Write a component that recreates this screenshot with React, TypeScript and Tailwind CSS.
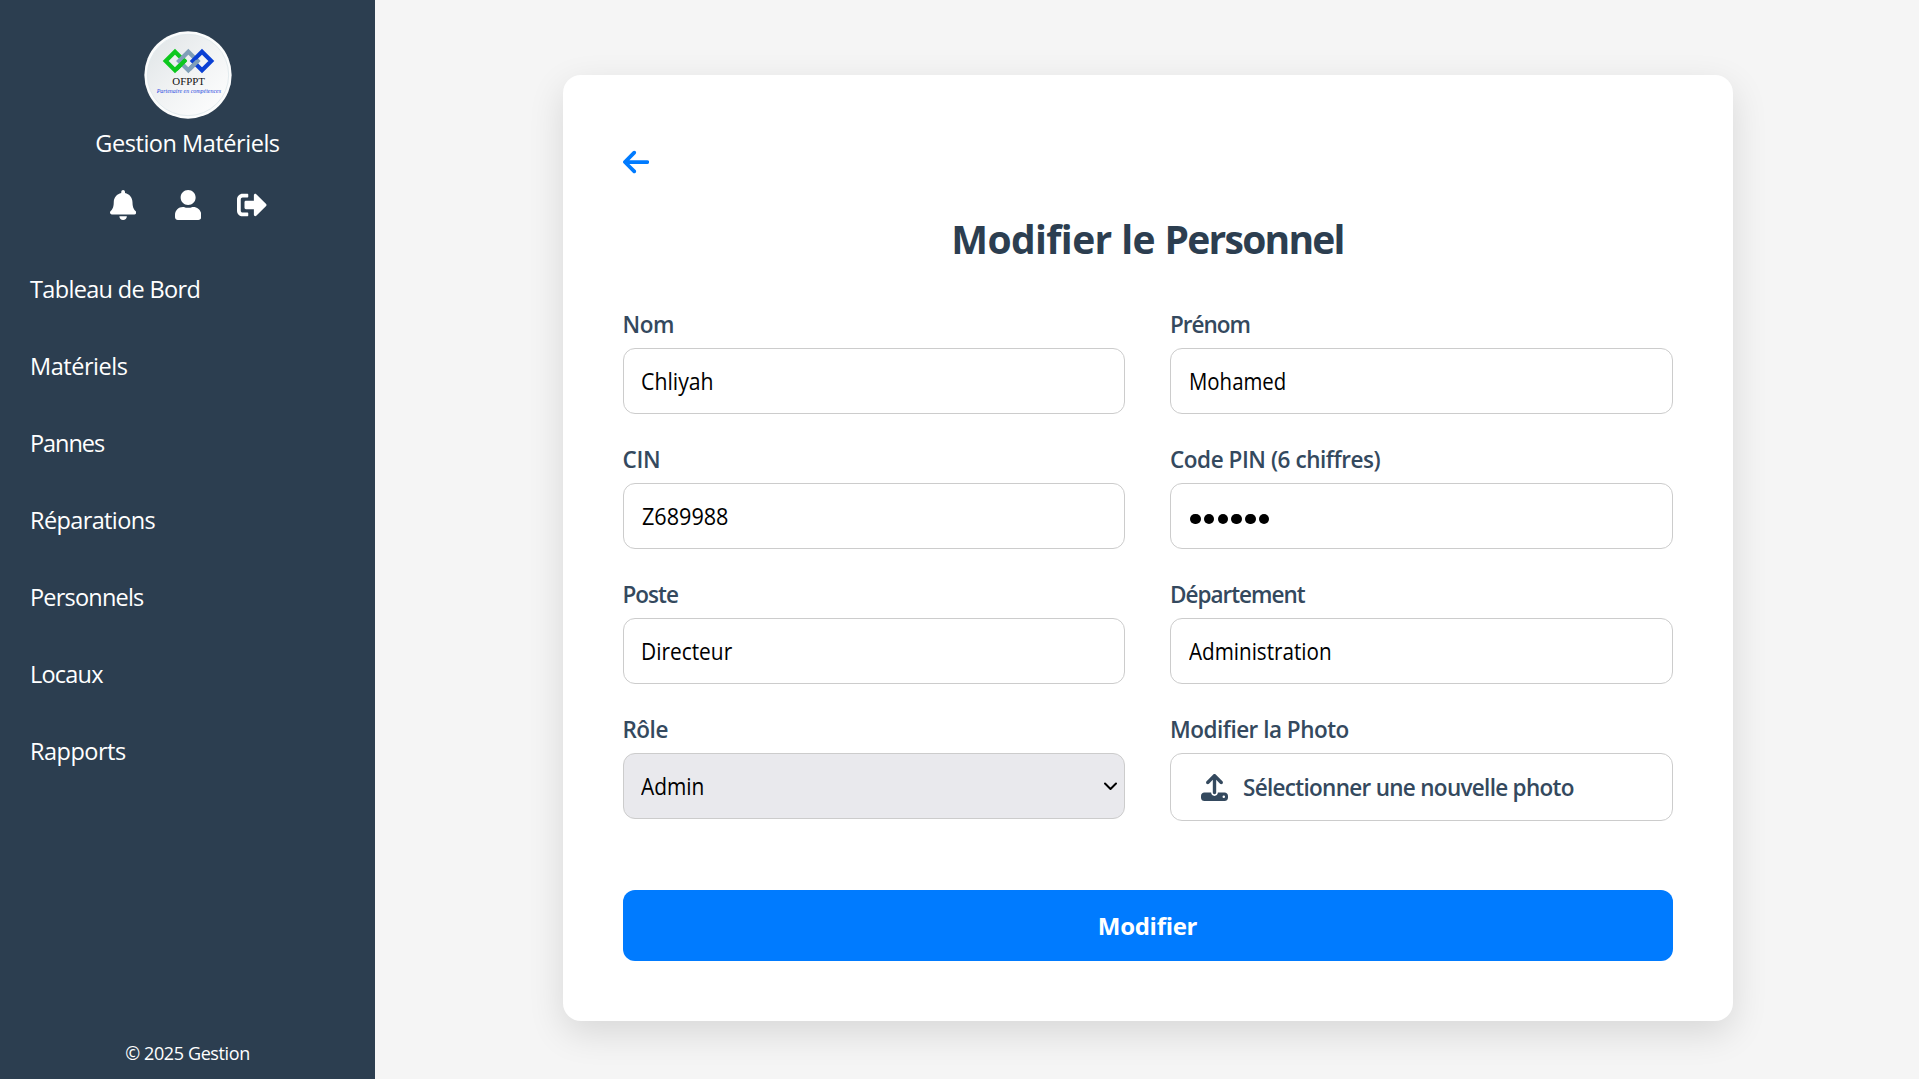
import type { ReactNode } from 'react';
import { FaBell, FaSignOutAlt, FaUser } from 'react-icons/fa';
import { FaArrowLeft, FaUpload } from 'react-icons/fa6';

const navItems = [
  { label: 'Tableau de Bord', tracking: 'tracking-[-0.66px]' },
  { label: 'Matériels', tracking: 'tracking-[-0.45px]' },
  { label: 'Pannes', tracking: 'tracking-[-1.05px]' },
  { label: 'Réparations', tracking: 'tracking-[-0.62px]' },
  { label: 'Personnels', tracking: 'tracking-[-0.8px]' },
  { label: 'Locaux', tracking: 'tracking-[-0.78px]' },
  { label: 'Rapports', tracking: 'tracking-[-0.5px]' },
];

function Logo() {
  return (
    <svg className="size-24 shrink-0" viewBox="0 0 288 288" aria-label="OFPPT">
      <defs>
        <linearGradient id="disc" x1="0" y1="0" x2="1" y2="1">
          <stop offset="0" stopColor="#dfe4e6" />
          <stop offset="0.5" stopColor="#f1f3f4" />
          <stop offset="1" stopColor="#ffffff" />
        </linearGradient>
      </defs>
      <circle cx="144" cy="141" r="131" fill="#fbfcfc" />
      <circle cx="144" cy="141" r="122" fill="url(#disc)" stroke="#e3ebee" strokeWidth="3" />
      <g fill="none" strokeWidth="12.500">
        <path d="M105 71l28 28-28 28-28-28z" stroke="#0cc81e" />
        <path d="M145 71l28 28-28 28-28-28z" stroke="#7f9fb8" />
        <path d="M110 122L134 98" stroke="#0cc81e" strokeLinecap="round" />
        <path d="M186 71l28 28-28 28-28-28z" stroke="#0a40d4" />
        <path d="M149 123L173 99" stroke="#7f9fb8" />
      </g>
      <text x="97" y="170" fontSize="33" textLength="98" lengthAdjust="spacingAndGlyphs" fill="#111" fontFamily="Liberation Serif, serif">
        OFPPT
      </text>
      <text x="50" y="195" fontSize="18" textLength="193" lengthAdjust="spacingAndGlyphs" fill="#2746e0" fontStyle="italic" fontFamily="Liberation Serif, serif">
        Partenaire en compétences
      </text>
    </svg>
  );
}

function Sidebar() {
  return (
    <aside className="flex w-[375px] shrink-0 flex-col bg-[#2c3e50] text-white">
      <div className="flex flex-col items-center pt-7">
        <Logo />
        <div className="mt-0.5 h-[34px] text-[23.5px] leading-[34px] tracking-[-0.46px]">
          Gestion Matériels
        </div>
        <div className="mt-[30px] ml-0.5 flex h-[30px] items-center text-[30px]">
          <FaBell className="w-[26.25px]" />
          <FaUser className="ml-[38.5px] w-[26.25px]" />
          <FaSignOutAlt className="ml-9" />
        </div>
      </div>
      <nav className="mt-[31px] flex flex-col">
        {navItems.map((item) => (
          <a key={item.label} className={`h-[77px] pl-[30px] text-[23.5px] leading-[77px] ${item.tracking}`}>
            {item.label}
          </a>
        ))}
      </nav>
      <footer className="mt-auto pb-3 text-center text-lg leading-7 tracking-[-0.39px]">
        © 2025 Gestion
      </footer>
    </aside>
  );
}

function Field({ label, tracking, children }: { label: string; tracking: string; children: ReactNode }) {
  return (
    <div className="flex flex-col">
      <label className={`mb-[7px] h-8 text-[22.5px] leading-8 font-semibold text-[#34495e] ${tracking}`}>
        {label}
      </label>
      {children}
    </div>
  );
}

const boxClass = 'flex h-[66px] items-center rounded-xl border border-[#ccc] px-[17px] text-2xl text-black';

function TextBox({ value, scale }: { value: string; scale: string }) {
  return (
    <div className={boxClass}>
      <span className={`inline-block origin-left ${scale}`}>{value}</span>
    </div>
  );
}

export default function App() {
  return (
    <div className="flex h-[1079px] w-full overflow-hidden bg-[#f5f5f5] font-['Open_Sans','Noto_Sans',sans-serif]">
      <Sidebar />
      <main className="flex flex-1 justify-center pt-[75px] pl-px">
        <section className="flex h-[946px] w-[1170px] flex-col rounded-[18px] bg-white p-[60px] shadow-[0_12px_36px_rgba(0,0,0,0.12)]">
          <div className="mt-3 flex h-[30px] items-center text-[30px] text-[#007bff]">
            <FaArrowLeft className="w-[26.25px]" />
          </div>
          <h1 className="mt-[38px] h-[48px] text-center text-[39px] leading-[48px] font-bold tracking-[-1.75px] text-[#2c3e50]">
            <span className="tracking-[-0.6px]">Modifier le </span>
            Personnel
          </h1>
          <form className="mt-[46px] flex flex-1 flex-col">
            <div className="grid grid-cols-2 gap-x-[45px] gap-y-[30px]">
              <Field label="Nom" tracking="tracking-[-0.4px]">
                <TextBox value="Chliyah" scale="scale-x-[0.885]" />
              </Field>
              <Field label="Prénom" tracking="tracking-[-1px]">
                <TextBox value="Mohamed" scale="ml-px scale-x-[0.85]" />
              </Field>
              <Field label="CIN" tracking="tracking-[-0.3px]">
                <TextBox value="Z689988" scale="ml-px scale-x-[0.9]" />
              </Field>
              <Field label="Code PIN (6 chiffres)" tracking="tracking-[-0.45px]">
                <div className={boxClass}>
                  <div className="mt-1.5 ml-[2px] flex gap-[3.300px]">
                    {[0, 1, 2, 3, 4, 5].map((i) => (
                      <span key={i} className="size-[10.500px] rounded-full bg-black" />
                    ))}
                  </div>
                </div>
              </Field>
              <Field label="Poste" tracking="tracking-[-1px]">
                <TextBox value="Directeur" scale="scale-x-[0.87]" />
              </Field>
              <Field label="Département" tracking="tracking-[-1px]">
                <TextBox value="Administration" scale="ml-px scale-x-[0.86]" />
              </Field>
              <Field label="Rôle" tracking="tracking-[-0.5px]">
                <div className={`${boxClass} justify-between bg-[#e9e9ed] pr-[7px]`}>
                  <span className="inline-block origin-left scale-x-[0.87]">Admin</span>
                  <svg className="h-[9px] w-[13px]" viewBox="0 0 13 9" fill="none">
                    <path d="M1 1.500l5.500 5.500L12 1.500" stroke="#000" strokeWidth="2" strokeLinecap="round" strokeLinejoin="round" />
                  </svg>
                </div>
              </Field>
              <Field label="Modifier la Photo" tracking="tracking-[-0.5px]">
                <div className="flex h-[68px] items-center rounded-xl border border-[#ccc] pl-[30px] text-[#34495e]">
                  <FaUpload className="size-[27px]" />
                  <span className="mt-0.5 ml-[15px] text-[22.5px] font-semibold tracking-[-0.7px]">
                    Sélectionner une nouvelle photo
                  </span>
                </div>
              </Field>
            </div>
            <button type="button" className="mt-auto h-[71px] rounded-xl bg-[#007bff] text-2xl font-bold tracking-[-0.3px] text-white">
              Modifier
            </button>
          </form>
        </section>
      </main>
    </div>
  );
}
